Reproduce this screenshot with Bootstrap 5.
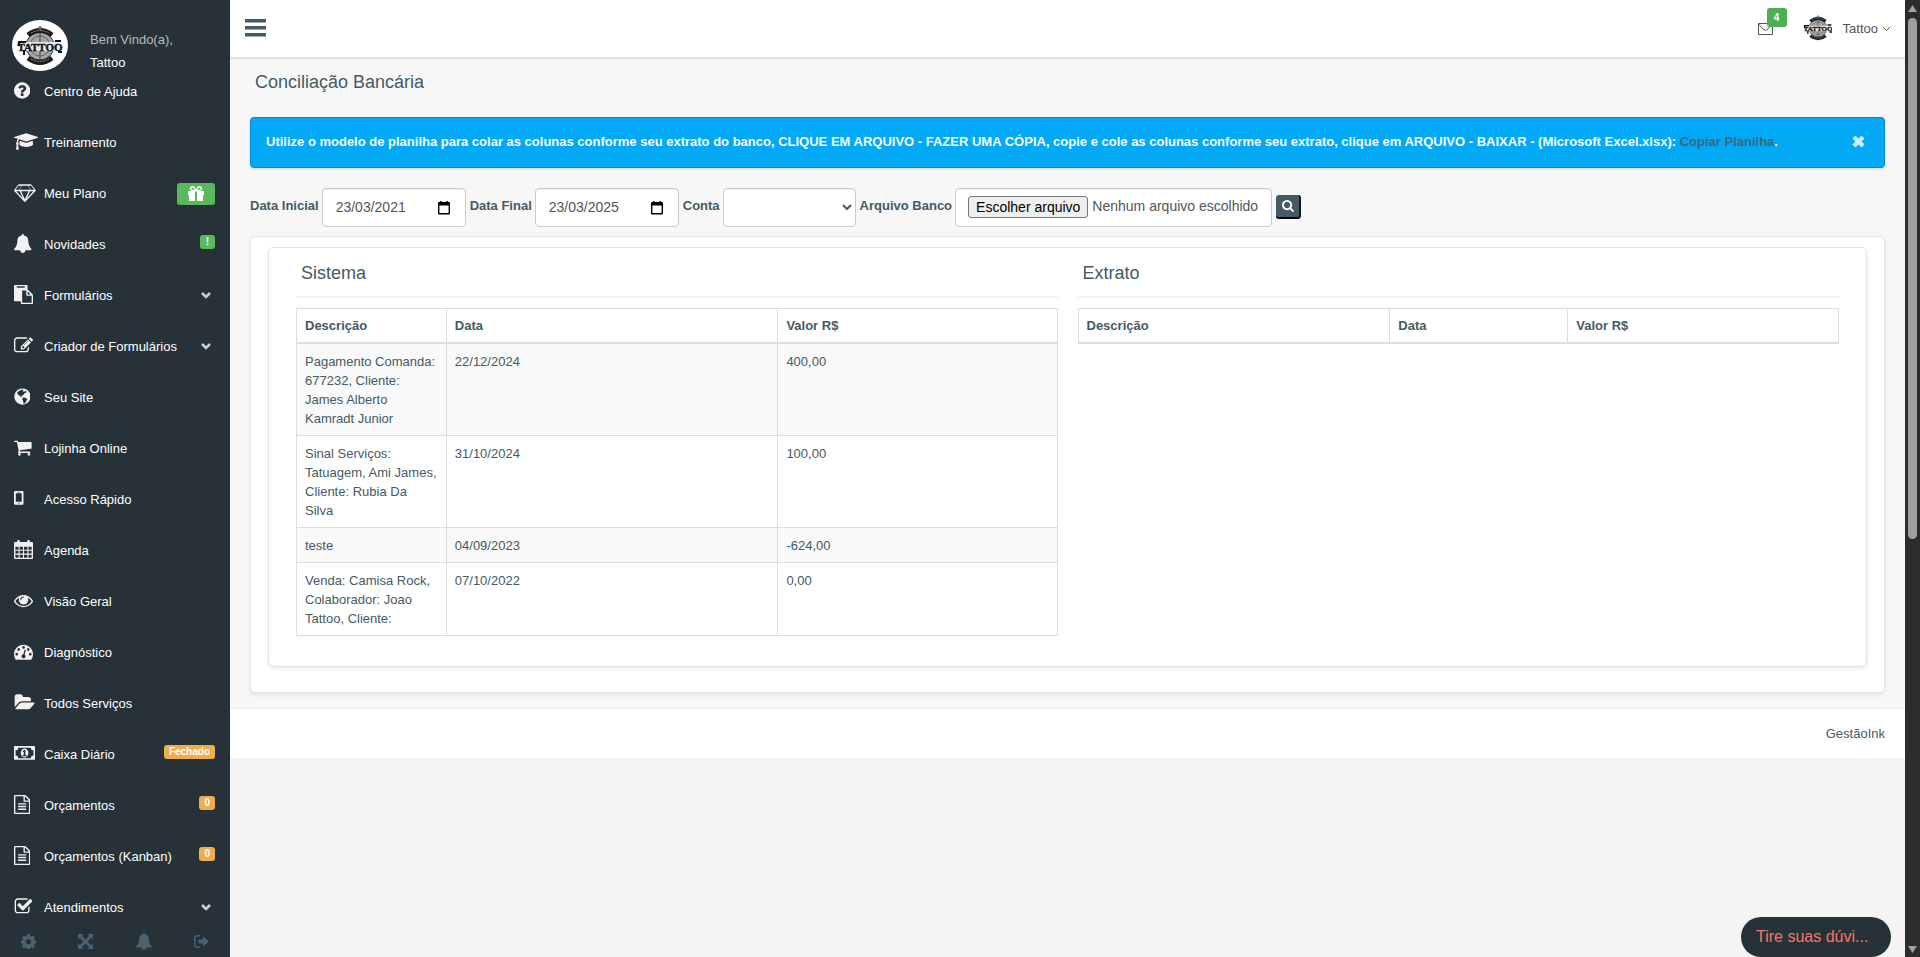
<!DOCTYPE html>
<html lang="pt-BR">
<head>
<meta charset="utf-8">
<meta name="viewport" content="width=device-width, initial-scale=1">
<title>Conciliação Bancária</title>
<link href="https://cdn.jsdelivr.net/npm/bootstrap@5.3.0/dist/css/bootstrap.min.css" rel="stylesheet">
<style>
  body { font: 13px/19px "Liberation Sans", Arial, sans-serif; color: #455a64; background: #f4f4f4; }
  a { text-decoration: none; }
  svg { display: block; fill: currentColor; }

  /* Sidebar */
  .side-col { width: 230px; background: #263238; color: #fff; }
  .profile-box { height: 66px; padding: 20px 12px 0; gap: 22px; }
  .profile-box svg { width: 56px; height: 51px; }
  .profile-box .hello { color: #bab8b8; margin-top: 10px; }
  .profile-box .who { margin-top: 4px; }
  .side-nav { min-height: 0; }
  .side-link { height: 51px; padding: 0 15px 0 14px; color: #fff; }
  .side-link .slot { width: 30px; flex: none; padding-bottom: 3px; color: #f2f2f2; }
  .side-link .slot svg { height: 19px; }
  .tag { border-radius: 3px; color: #fff; font-weight: 700; font-size: 10px; line-height: 14px; padding: 0 5px; margin-bottom: 6px; }
  .tag-ok { background: #5cb85c; padding: 0 6px; }
  .tag-warn { background: #f0ad4e; }
  .gift { background: #5cb85c; border-radius: 3px; padding: 3px 11px; }
  .caret { width: 10px; margin-right: 4px; color: #c4cfda; }
  .side-foot { height: 32px; background: #263238; color: #4b6270; }
  .side-foot button { background: none; border: 0; color: inherit; padding: 0; }

  /* Top bar */
  .top-bar { height: 58px; background: #fff; border-bottom: 1px solid #d9dee4; box-shadow: 0 1px 3px rgba(0,0,0,.1); padding: 0 14px 0 15px; }
  .burger { background: none; border: 0; padding: 0 0 2px; color: #455a64; }
  .top-tools { gap: 31px; }
  .mail-link { color: #515356; }
  .mail-count { position: absolute; left: 9px; top: -15px; width: 20px; line-height: 19px; font-size: 10px; font-weight: 700; text-align: center; color: #fff; background: #4caf50; border-radius: 3px; }
  .user-link { color: #515356; gap: 11px; }

  /* Page */
  .page-area { background: #f7f7f7; padding: 14px 20px 16px; }
  .main-col { min-width: 0; }
  .page-title { font-size: 18px; line-height: 20px; padding: 0 5px; margin: 0 0 25px; font-weight: 400; }
  .notice { min-height: 51px; background: #03a9f4; border: 1px solid #0288d1; border-radius: 4px; color: #f4fbff; font-weight: 700; padding: 0 19px 2px 15px; box-shadow: 0 1px 3px rgba(0,0,0,.12); margin-bottom: 20px; }
  .notice a { color: #37687f; }
  .notice button { background: none; border: 0; padding: 0; color: #c5edfd; }
  .filters { gap: 4px; margin-bottom: 9px; }
  .filters label.cap { font-weight: 700; margin: 0 -1px 4px 0; white-space: nowrap; }
  .field { height: 39px; background: #fff; border: 1px solid #ccc; border-radius: 4px; box-shadow: inset 0 1px 1px rgba(0,0,0,.075); color: #555; font-size: 14px; }
  .date-field { width: 144px; padding: 0 15px 0 13px; }
  .date-field svg { color: #000; }
  .date-field input { min-width: 0; flex: 1; border: 0; padding: 0; background: none; color: inherit; outline: 0; }
  select.field { width: 133px; }
  .file-field { width: 317px; padding: 0 12px 2px; gap: 4px; white-space: nowrap; }
  .pick { border: 1px solid #767676; border-radius: 3px; background: #efefef; color: #000; padding: 0 7px; line-height: 20px; }
  .go { width: 25px; height: 24px; margin-bottom: 2px; padding: 0; background: #455a64; color: #fff; border: 0; border-right: 2px solid #111b20; border-bottom: 2px solid #000; border-radius: 3px; }
  .panel-box { background: #fff; border: 1px solid #e4e4e4; border-radius: 5px; box-shadow: 0 2px 4px rgba(0,0,0,.08); }
  .outer { padding: 10px 17px 25px; }
  .inner { padding: 14px 27px 30px; }
  .halves { gap: 20px; }
  .half-title { font-size: 18px; line-height: 22px; font-weight: 400; padding: 0 5px 12px; margin: 0 0 10px; border-bottom: 2px solid #f2f3f4; }
  .grid-table { table-layout: fixed; margin: 0; color: inherit; border-color: #ddd; }
  .grid-table > :not(caption) > * > * { padding: 8px 8px 7px; border: 1px solid #ddd; color: inherit; background: none; box-shadow: none; }
  .grid-table > thead > tr > th { border-bottom-width: 2px; padding: 7px 8px; }
  .grid-table > tbody > tr:nth-child(odd) > td { background: #f9f9f9; }
  .sys-desc { width: 19.7%; } .sys-date { width: 43.6%; } .ext-desc { width: 41%; } .ext-date { width: 23.4%; }
  .page-foot { background: #fff; padding: 15px 20px; box-shadow: 0 -1px 3px rgba(0,0,0,.06); }

  /* Scroll strip and chat */
  .scroll-strip { width: 15px; background: #2c2c2c; color: #9f9f9f; padding: 5px 3px 4px; }
  .thumb { width: 9px; height: 55%; margin-top: 6px; border-radius: 5px; background: #9f9f9f; }
  .chat { position: fixed; right: 29px; bottom: 0; width: 150px; height: 40px; border: 0; border-radius: 20px; padding: 0 15px 2px; background: #263238; color: #f97463; font-size: 16px; text-align: left; }
</style>
</head>
<body>
<svg class="d-none" xmlns="http://www.w3.org/2000/svg">
  <symbol id="bell" viewBox="64 0 1664 1792"><path d="M1728 1408q0 52-38 90t-90 38h-448q0 106-75 181t-181 75-181-75-75-181h-448q-52 0-90-38t-38-90q50-42 91-88t85-119.5 74.5-158.5 50-206 19.5-260q0-152 117-282.5t307-158.5q-8-19-8-39 0-40 28-68t68-28 68 28 28 68q0 20-8 39 190 28 307 158.5t117 282.5q0 139 19.5 260t50 206 74.5 158.5 85 119.5 91 88z"/></symbol>
  <symbol id="doc" viewBox="128 0 1536 1792"><path d="M1596 380q28 28 48 76t20 88v1152q0 40-28 68t-68 28h-1344q-40 0-68-28t-28-68v-1600q0-40 28-68t68-28h896q40 0 88 20t76 48zm-444-244v376h376q-10-29-22-41l-313-313q-12-12-41-22zm384 1528v-1024h-416q-40 0-68-28t-28-68v-416h-768v1536h1280zm-1024-864q0-14 9-23t23-9h704q14 0 23 9t9 23v64q0 14-9 23t-23 9h-704q-14 0-23-9t-9-23v-64zm736 224q14 0 23 9t9 23v64q0 14-9 23t-23 9h-704q-14 0-23-9t-9-23v-64q0-14 9-23t23-9h704zm0 256q14 0 23 9t9 23v64q0 14-9 23t-23 9h-704q-14 0-23-9t-9-23v-64q0-14 9-23t23-9h704z"/></symbol>
  <symbol id="down" viewBox="0 0 10 7"><path d="M1 1l4 4 4-4" fill="none" stroke="currentColor" stroke-width="2.6"/></symbol>
  <symbol id="cal" viewBox="0 0 12 14"><path fill-rule="evenodd" d="M2 0h1.500v1h5V0H10v1h1q1 0 1 1v10.500q0 1-1 1H1q-1 0-1-1V2q0-1 1-1h1zM1.400 4.500v7.600h9.200V4.500z"/></symbol>
  <symbol id="brand" viewBox="0 0 56 51">
    <g fill="none" stroke="#333"><circle cx="28" cy="26" r="14" stroke-width="1" fill="#a5a5a5"/><circle cx="28" cy="26" r="10" stroke="#666"/><path d="M28 6v38M14 26h28" stroke="#444"/><path d="M16 15q12-9 24 0M16 38q12 9 24 0" stroke="#1b1b1b" stroke-width="5"/><path d="M19 13q9-5 18 0M19 39q9 5 18 0" stroke="#999" stroke-dasharray="2 1"/><circle cx="28" cy="8" r="1.500" stroke="#777"/></g>
    <path d="M9 22h38v9H9z" fill="#e8e8e8"/>
    <text x="28" y="31" text-anchor="middle" font-family="Liberation Serif, serif" font-weight="700" font-size="11" fill="#111" stroke="#111" stroke-width=".4">TATTOO</text>
    <path d="M6 21h8v2H8v3H6zM43 20h6v2h-6zM46 31h4v2h-4zM11 30h2v5h-2z" fill="#111"/>
  </symbol>
</svg>

<div class="d-flex vh-100 overflow-hidden">
  <aside class="side-col d-flex flex-column flex-shrink-0">
    <div class="profile-box d-flex align-items-start flex-shrink-0">
      <svg viewBox="0 0 56 51"><ellipse cx="28" cy="25.500" rx="28" ry="25.500" fill="#fff"/><use href="#brand"/></svg>
      <div><div class="hello">Bem Vindo(a),</div><div class="who">Tattoo</div></div>
    </div>
    <nav class="side-nav flex-grow-1 overflow-hidden">
      <a href="#" class="side-link d-flex align-items-center"><span class="slot"><svg viewBox="128 0 1536 1792"><path d="M1024 1376v-192q0-14-9-23t-23-9h-192q-14 0-23 9t-9 23v192q0 14 9 23t23 9h192q14 0 23-9t9-23zm256-672q0-88-55.500-163t-138.500-116-170-41q-243 0-371 213-15 24 8 42l132 100q7 6 19 6 16 0 25-12 53-68 86-92 34-24 86-24 48 0 85.500 26t37.500 59q0 38-20 61t-68 45q-63 28-115.500 86.500t-52.500 125.500v36q0 14 9 23t23 9h192q14 0 23-9t9-23q0-19 21.500-49.500t54.500-49.500q32-18 49-28.500t46-35 44.500-48 28-60.500 12.500-81zm384 192q0 209-103 385.500t-279.500 279.500-385.500 103-385.500-103-279.500-279.500-103-385.500 103-385.500 279.500-279.500 385.500-103 385.500 103 279.500 279.500 103 385.500z"/></svg></span><span class="flex-grow-1">Centro de Ajuda</span></a>
      <a href="#" class="side-link d-flex align-items-center"><span class="slot"><svg viewBox="0 0 2304 1792"><path d="M1774 836l18 316q4 69-82 128t-235 93.500-323 34.500-323-34.500-235-93.500-82-128l18-316 574 181q22 7 48 7t48-7zm530-324q0 23-22 31l-1120 352q-4 1-10 1t-10-1l-652-206q-43 34-71 111.500t-34 178.500q63 36 63 109 0 69-58 107l58 433q2 14-8 25-9 11-24 11h-192q-15 0-24-11-10-11-8-25l58-433q-58-38-58-107 0-73 65-111 11-207 98-330l-333-104q-22-8-22-31t22-31l1120-352q4-1 10-1t10 1l1120 352q22 8 22 31z"/></svg></span><span class="flex-grow-1">Treinamento</span></a>
      <a href="#" class="side-link d-flex align-items-center"><span class="slot"><svg viewBox="0 0 2048 1792"><path fill-rule="evenodd" d="M1651 154l384 512q14 18 13 41.500t-17 40.500l-960 1024q-18 20-47 20t-47-20l-960-1024q-16-17-17-40.500t13-41.500l384-512q18-26 51-26h1152q33 0 51 26zM212 768l623 665-300-665zM1024 1540l349-772h-698zM486 640l204-384h-262l-288 384zM1213 1433l623-665h-323zM530 640h988l-204-384h-580zM1562 640h346l-288-384h-262z"/></svg></span><span class="flex-grow-1">Meu Plano</span><span class="gift"><svg width="16" height="16" viewBox="0 0 16 16"><path fill-rule="evenodd" d="M0 5h4.500C0 4 2 0 4.500 0 6.500 0 7.500 2 8 3.500 8.500 2 9.500 0 11.500 0 14 0 16 4 11.500 5H16v4h-1v6H9V5.500H7V15H1V9H0zM4.500 1.700c-1.600 0-1.600 2 0 2H6.800C6 2.300 5.300 1.700 4.500 1.700zM11.500 1.700c-.8 0-1.500.6-2.300 2h2.300c1.600 0 1.600-2 0-2z"/></svg></span></a>
      <a href="#" class="side-link d-flex align-items-center"><span class="slot"><svg viewBox="0 0 1664 1792"><use href="#bell" width="1664" height="1792"/></svg></span><span class="flex-grow-1">Novidades</span><span class="tag tag-ok">!</span></a>
      <a href="#" class="side-link d-flex align-items-center"><span class="slot"><svg viewBox="0 0 1792 1792"><path d="M768 1664h896v-640h-416q-40 0-68-28t-28-68v-416h-384v1152zm256-1440v-64q0-13-9.500-22.500t-22.500-9.500h-704q-13 0-22.500 9.500t-9.500 22.500v64q0 13 9.500 22.500t22.500 9.500h704q13 0 22.500-9.500t9.500-22.500zm256 672h299l-299-299v299zm512 128v672q0 40-28 68t-68 28h-960q-40 0-68-28t-28-68v-160h-544q-40 0-68-28t-28-68v-1344q0-40 28-68t68-28h1088q40 0 68 28t28 68v328q21 13 36 28l408 408q28 28 48 76t20 88z"/></svg></span><span class="flex-grow-1">Formulários</span><svg class="caret" height="7"><use href="#down"/></svg></a>
      <a href="#" class="side-link d-flex align-items-center"><span class="slot"><svg viewBox="0 0 1792 1792"><path d="M888 1184l116-116-152-152-116 116v56h96v96h56zm440-720q-16-16-33 1l-350 350q-17 17-1 33t33-1l350-350q17-17 1-33zm80 594v190q0 119-84.500 203.500t-203.500 84.500h-832q-119 0-203.500-84.500t-84.500-203.500v-832q0-119 84.500-203.500t203.500-84.500h832q63 0 117 25 15 7 18 23 3 17-9 29l-49 49q-14 14-32 8-23-6-45-6h-832q-66 0-113 47t-47 113v832q0 66 47 113t113 47h832q66 0 113-47t47-113v-126q0-13 9-22l64-64q15-15 35-7t20 29zm-96-738l288 288-672 672h-288v-288zm444 132l-92 92-288-288 92-92q28-28 68-28t68 28l152 152q28 28 28 68t-28 68z"/></svg></span><span class="flex-grow-1">Criador de Formulários</span><svg class="caret" height="7"><use href="#down"/></svg></a>
      <a href="#" class="side-link d-flex align-items-center"><span class="slot"><svg viewBox="0 0 15.400 18"><path fill-rule="evenodd" d="M8 1.300a7.700 7.700 0 1 0 .01 0zM6 3l2-.6 1 .6-1 1 1.500.5 1.700-.8 1 1.300-2 .8-1.600 2-1.600.4.6 1.400-1.500-.5-1.300-1.600L3.500 7l-.4-2zM8.500 10l2.500.3 1.800 1.700-1.200 1-.6 2-2 .8-.3-2.300-1-1.800z"/></svg></span><span class="flex-grow-1">Seu Site</span></a>
      <a href="#" class="side-link d-flex align-items-center"><span class="slot"><svg viewBox="64 0 1664 1792"><path d="M704 1536q0 52-38 90t-90 38-90-38-38-90 38-90 90-38 90 38 38 90zm896 0q0 52-38 90t-90 38-90-38-38-90 38-90 90-38 90 38 38 90zm128-1088v512q0 24-16.500 42.500t-40.500 21.500l-1044 122q13 60 13 70 0 16-24 64h920q26 0 45 19t19 45-19 45-45 19h-1024q-26 0-45-19t-19-45q0-11 8-31.500t16-36 21.500-40 15.500-29.500l-177-823h-204q-26 0-45-19t-19-45 19-45 45-19h256q16 0 28.500 6.500t19.500 15.500 13 24.500 8 26 5.500 29.500 4.500 26h1201q26 0 45 19t19 45z"/></svg></span><span class="flex-grow-1">Lojinha Online</span></a>
      <a href="#" class="side-link d-flex align-items-center"><span class="slot"><svg viewBox="0 0 9 18"><path fill-rule="evenodd" d="M1 2h7q1 0 1 1v11q0 1-1 1H1q-1 0-1-1V3q0-1 1-1zM1.700 4v8h5.600V4zM3 2.800v.5h3v-.5zM4 13v1h1v-1z"/></svg></span><span class="flex-grow-1">Acesso Rápido</span></a>
      <a href="#" class="side-link d-flex align-items-center"><span class="slot"><svg viewBox="0 0 18 18"><path fill-rule="evenodd" d="M1 2h2V1q0-1 1.300-1T5.500 1v1h7V1q0-1 1.300-1T15 1v1h2q1 0 1 1v14q0 1-1 1H1q-1 0-1-1V3q0-1 1-1zM1.300 6.500v2.700h3V6.500zM5.300 6.500v2.700h3.200V6.500zM9.500 6.500v2.700h3.200V6.500zM13.700 6.500v2.700h3V6.500zM1.300 10.200v2.700h3v-2.700zM5.300 10.200v2.700h3.200v-2.700zM9.500 10.200v2.700h3.200v-2.700zM13.700 10.200v2.700h3v-2.700zM1.300 13.900v2.800h3v-2.800zM5.300 13.900v2.800h3.200v-2.800zM9.500 13.900v2.800h3.200v-2.800zM13.700 13.900v2.800h3v-2.800z"/></svg></span><span class="flex-grow-1">Agenda</span></a>
      <a href="#" class="side-link d-flex align-items-center"><span class="slot"><svg viewBox="0 0 1792 1792"><path d="M1664 960q-152-236-381-353 61 104 61 225 0 185-131.500 316.500t-316.500 131.500-316.500-131.500-131.500-316.500q0-121 61-225-229 117-381 353 133 205 333.500 326.500t434.500 121.500 434.500-121.500 333.500-326.500zm-720-384q0-20-14-34t-34-14q-125 0-214.500 89.500t-89.500 214.500q0 20 14 34t34 14 34-14 14-34q0-86 61-147t147-61q20 0 34-14t14-34zm848 384q0 34-20 69-140 230-376.500 368.500t-499.500 138.500-499.500-139-376.500-368q-20-35-20-69t20-69q140-229 376.500-368t499.500-139 499.500 139 376.500 368q20 35 20 69z"/></svg></span><span class="flex-grow-1">Visão Geral</span></a>
      <a href="#" class="side-link d-flex align-items-center"><span class="slot"><svg viewBox="0 0 1792 1792"><path d="M384 1152q0-53-37.500-90.500t-90.500-37.500-90.500 37.500-37.500 90.500 37.500 90.500 90.500 37.500 90.500-37.500 37.500-90.500zm192-448q0-53-37.500-90.500t-90.500-37.500-90.500 37.500-37.500 90.500 37.500 90.500 90.500 37.500 90.500-37.500 37.500-90.500zm428 481l101-382q6-26-7.500-48.500t-38.500-29.500-48 6.500-30 39.500l-101 382q-60 5-107 43.500t-63 98.500q-20 77 20 146t117 89 146-20 89-117q16-60-6-117t-72-91zm660-33q0-53-37.500-90.500t-90.500-37.500-90.500 37.500-37.500 90.500 37.500 90.500 90.500 37.500 90.500-37.500 37.500-90.500zm-640-640q0-53-37.500-90.500t-90.500-37.500-90.500 37.500-37.500 90.500 37.500 90.500 90.500 37.500 90.500-37.500 37.500-90.500zm448 192q0-53-37.500-90.500t-90.500-37.500-90.500 37.500-37.500 90.500 37.500 90.500 90.500 37.500 90.500-37.500 37.500-90.500zm320 448q0 261-141 483-19 29-54 29h-1402q-35 0-54-29-141-221-141-483 0-182 71-348t191-286 286-191 348-71 348 71 286 191 191 286 71 348z"/></svg></span><span class="flex-grow-1">Diagnóstico</span></a>
      <a href="#" class="side-link d-flex align-items-center"><span class="slot"><svg viewBox="0 0 1943 1792"><path d="M1943 952q0 31-31 66l-336 396q-43 51-120.500 86.500t-143.500 35.500h-1088q-34 0-60.500-13t-26.500-43q0-31 31-66l336-396q43-51 120.500-86.500t143.500-35.500h1088q34 0 60.500 13t26.500 43zm-343-344v160h-832q-94 0-197 47.500t-164 119.500l-337 396-5 6q0-4-.500-12.500t-.500-12.500v-960q0-92 66-158t158-66h320q92 0 158 66t66 158v32h544q92 0 158 66t66 158z"/></svg></span><span class="flex-grow-1">Todos Serviços</span></a>
      <a href="#" class="side-link d-flex align-items-center"><span class="slot"><svg viewBox="0 0 20 18"><path fill-rule="evenodd" d="M.7 2h18.600q.7 0 .7.700v11.600q0 .7-.7.700H.7Q0 15 0 14.300V2.700Q0 2 .7 2zM4 3.500Q4 6 1.500 6v5Q4 11 4 13.500h12q0-2.500 2.500-2.500V6Q16 6 16 3.500zM10 4.300a3.600 4.200 0 1 1-.01 0zM8.300 6.700v1l1-.3v3h-1v1.100h3.500v-1.100h-1V5.700H9.600z"/></svg></span><span class="flex-grow-1">Caixa Diário</span><span class="tag tag-warn">Fechado</span></a>
      <a href="#" class="side-link d-flex align-items-center"><span class="slot"><svg viewBox="0 0 1536 1792"><use href="#doc" width="1536" height="1792"/></svg></span><span class="flex-grow-1">Orçamentos</span><span class="tag tag-warn">0</span></a>
      <a href="#" class="side-link d-flex align-items-center"><span class="slot"><svg viewBox="0 0 1536 1792"><use href="#doc" width="1536" height="1792"/></svg></span><span class="flex-grow-1">Orçamentos (Kanban)</span><span class="tag tag-warn">0</span></a>
      <a href="#" class="side-link d-flex align-items-center"><span class="slot"><svg viewBox="0 0 1728 1792"><path d="M1472 930v318q0 119-84.500 203.500t-203.500 84.500h-832q-119 0-203.500-84.500t-84.500-203.500v-832q0-119 84.500-203.500t203.500-84.500h832q63 0 117 25 15 7 18 23 3 17-9 29l-49 49q-10 10-23 10-3 0-9-2-23-6-45-6h-832q-66 0-113 47t-47 113v832q0 66 47 113t113 47h832q66 0 113-47t47-113v-254q0-13 9-22l64-64q10-10 23-10 6 0 12 3 20 8 20 29zm231-489l-814 814q-24 24-57 24t-57-24l-430-430q-24-24-24-57t24-57l110-110q24-24 57-24t57 24l263 263 647-647q24-24 57-24t57 24l110 110q24 24 24 57t-24 57z"/></svg></span><span class="flex-grow-1">Atendimentos</span><svg class="caret" height="7"><use href="#down"/></svg></a>
    </nav>
    <div class="side-foot d-flex align-items-center flex-shrink-0">
      <button class="flex-fill d-flex justify-content-center" aria-label="Configurações"><svg width="15" height="15" viewBox="0 0 16 16"><path fill-rule="evenodd" d="M6.600 0h2.800l.5 2.200 1.200.5 1.900-1.200 2 2-1.200 1.900.5 1.200 2.200.5v2.800l-2.200.5-.5 1.200 1.200 1.900-2 2-1.900-1.200-1.200.5-.5 2.200H6.600l-.5-2.200-1.200-.5L3 15.500l-2-2 1.200-1.900-.5-1.200L0 9.900V7.100l1.700-.5.500-1.200L1 3.500l2-2 1.900 1.200 1.200-.5zM8 5.200a2.900 2.900 0 1 0 .01 0z"/></svg></button>
      <button class="flex-fill d-flex justify-content-center" aria-label="Tela cheia"><svg width="15" height="15" viewBox="0 0 15 15"><path d="M0 0h5.500L3.800 1.700 7.500 5.400l3.700-3.700L9.500 0H15v5.500l-1.700-1.700-3.700 3.700 3.700 3.700L15 9.500V15H9.500l1.700-1.700-3.700-3.700-3.700 3.700L5.500 15H0V9.500l1.700 1.700 3.700-3.700-3.700-3.700L0 5.500z"/></svg></button>
      <button class="flex-fill d-flex justify-content-center" aria-label="Avisos"><svg width="16" height="17"><use href="#bell"/></svg></button>
      <button class="flex-fill d-flex justify-content-center" aria-label="Sair"><svg width="15" height="13" viewBox="0 0 15 13"><path d="M6 .800H3Q.700.800.700 3v7q0 2.200 2.300 2.200h3" fill="none" stroke="currentColor" stroke-width="1.500"/><path d="M4.500 4.500H9V1.200l6 5.300-6 5.300V8.500H4.500z"/></svg></button>
    </div>
  </aside>

  <div class="main-col flex-grow-1 overflow-hidden d-flex flex-column">
    <header class="top-bar d-flex align-items-center justify-content-between flex-shrink-0 position-relative">
      <button class="burger" aria-label="Menu"><svg width="21" height="18" viewBox="0 0 21 18"><path d="M0 0h21v3.500H0zM0 7h21v3.500H0zM0 14h21v3.500H0z"/></svg></button>
      <div class="top-tools d-flex align-items-center">
        <a href="#" class="mail-link position-relative" aria-label="Mensagens"><svg width="15" height="12" viewBox="0 0 15 12"><path d="M.500.500h14v11H.500zM.500 1l5 5.500q2 1.500 4 0l5-5.500" fill="none" stroke="currentColor"/></svg><span class="mail-count">4</span></a>
        <a href="#" class="user-link d-flex align-items-center"><svg width="28" height="29" viewBox="6 5 44 43"><use href="#brand" width="56" height="51"/></svg><span class="d-flex align-items-center gap-1">Tattoo <svg width="9" height="6" viewBox="0 0 9 6"><path d="M1 1l3.500 3.500L8 1" fill="none" stroke="currentColor"/></svg></span></a>
      </div>
    </header>
    <main class="page-area">
      <h1 class="page-title">Conciliação Bancária</h1>
      <div class="notice d-flex align-items-center justify-content-between">
        <div>Utilize o modelo de planilha para colar as colunas conforme seu extrato do banco, CLIQUE EM ARQUIVO - FAZER UMA CÓPIA, copie e cole as colunas conforme seu extrato, clique em ARQUIVO - BAIXAR - (Microsoft Excel.xlsx): <a href="#">Copiar Planilha</a>.</div>
        <button aria-label="Fechar"><svg width="13" height="13" viewBox="0 0 12 12"><path d="M1.800 1.800l8.400 8.400M10.200 1.800l-8.400 8.400" stroke="currentColor" stroke-width="4"/></svg></button>
      </div>
      <form class="filters d-flex align-items-center">
        <label class="cap" for="d1">Data Inicial</label>
        <div class="field date-field d-flex align-items-center"><input id="d1" type="text" value="23/03/2021"><svg width="12" height="14"><use href="#cal"/></svg></div>
        <label class="cap" for="d2">Data Final</label>
        <div class="field date-field d-flex align-items-center"><input id="d2" type="text" value="23/03/2025"><svg width="12" height="14"><use href="#cal"/></svg></div>
        <label class="cap" for="conta">Conta</label>
        <select id="conta" class="field"><option></option></select>
        <label class="cap" for="arq">Arquivo Banco</label>
        <div class="field file-field d-flex align-items-center"><input id="arq" type="file" class="visually-hidden"><label for="arq" class="pick">Escolher arquivo</label><span>Nenhum arquivo escolhido</span></div>
        <button type="button" class="go d-flex align-items-center justify-content-center" aria-label="Pesquisar"><svg width="12" height="12" viewBox="64 128 1664 1664"><path d="M1216 832q0-185-131.500-316.500t-316.500-131.500-316.500 131.500-131.500 316.500 131.500 316.500 316.500 131.500 316.500-131.500 131.500-316.500zm512 832q0 52-38 90t-90 38q-54 0-90-38l-343-342q-179 124-399 124-143 0-273.500-55.500t-225-150-150-225-55.500-273.500 55.500-273.500 150-225 225-150 273.500-55.500 273.500 55.500 225 150 150 225 55.500 273.500q0 220-124 399l343 343q37 37 37 90z"/></svg></button>
      </form>
      <section class="panel-box outer">
        <div class="panel-box inner">
          <div class="halves d-flex align-items-start">
            <div class="w-50">
              <h2 class="half-title">Sistema</h2>
              <table class="table table-bordered grid-table">
                <thead><tr><th class="sys-desc">Descrição</th><th class="sys-date">Data</th><th>Valor R$</th></tr></thead>
                <tbody>
                  <tr><td>Pagamento Comanda: 677232, Cliente: James Alberto Kamradt Junior</td><td>22/12/2024</td><td>400,00</td></tr>
                  <tr><td>Sinal Serviços: Tatuagem, Ami James, Cliente: Rubia Da Silva</td><td>31/10/2024</td><td>100,00</td></tr>
                  <tr><td>teste</td><td>04/09/2023</td><td>-624,00</td></tr>
                  <tr><td>Venda: Camisa Rock, Colaborador: Joao Tattoo, Cliente:</td><td>07/10/2022</td><td>0,00</td></tr>
                </tbody>
              </table>
            </div>
            <div class="w-50">
              <h2 class="half-title">Extrato</h2>
              <table class="table table-bordered grid-table">
                <thead><tr><th class="ext-desc">Descrição</th><th class="ext-date">Data</th><th>Valor R$</th></tr></thead>
              </table>
            </div>
          </div>
        </div>
      </section>
    </main>
    <footer class="page-foot text-end">GestãoInk</footer>
  </div>

  <div class="scroll-strip flex-shrink-0 d-flex flex-column align-items-center">
    <svg class="flex-shrink-0" width="9" height="7" viewBox="0 0 9 7"><path d="M4.500 0L9 7H0z"/></svg>
    <div class="thumb"></div>
    <svg class="mt-auto flex-shrink-0" width="9" height="7" viewBox="0 0 9 7"><path d="M0 0h9L4.500 7z"/></svg>
  </div>
</div>
<button class="chat text-truncate">Tire suas dúvi...</button>
<script src="https://cdn.jsdelivr.net/npm/bootstrap@5.3.0/dist/js/bootstrap.bundle.min.js"></script>
</body>
</html>
